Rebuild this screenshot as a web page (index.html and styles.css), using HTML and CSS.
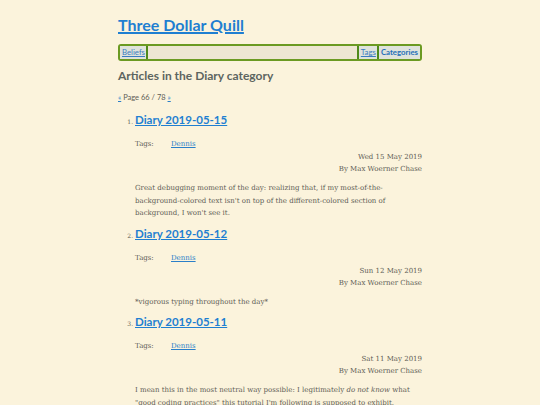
FILE: index.html
```html
<!DOCTYPE html>
<html>
<head>
<meta charset="utf-8">
<link rel="stylesheet" href="styles.css">
</head>
<body>
<div class="page">
  <h1 class="site-title"><a href="#">Three Dollar Quill</a></h1>
  <nav class="nav">
    <a class="nav-link" href="#">Beliefs</a>
    <span class="nav-fill"></span>
    <a class="nav-link nav-link-left" href="#">Tags</a>
    <a class="nav-link nav-current" href="#">Categories</a>
  </nav>
  <h2 class="page-heading">Articles in the Diary category</h2>
  <p class="pager"><a href="#">«</a> Page 66 / 78 <a href="#">»</a></p>
  <ol class="articles" start="1">
    <li class="article">
      <h3 class="article-title"><a href="#">Diary 2019-05-15</a></h3>
      <div class="tags"><span class="tags-label">Tags:</span><a href="#">Dennis</a></div>
      <div class="meta meta-date">Wed 15 May 2019</div>
      <div class="meta">By Max Woerner Chase</div>
      <p class="summary">Great debugging moment of the day: realizing that, if my most-of-the-background-colored text isn't on top of the different-colored section of background, I won't see it.</p>
    </li>
    <li class="article">
      <h3 class="article-title"><a href="#">Diary 2019-05-12</a></h3>
      <div class="tags"><span class="tags-label">Tags:</span><a href="#">Dennis</a></div>
      <div class="meta meta-date">Sun 12 May 2019</div>
      <div class="meta">By Max Woerner Chase</div>
      <p class="summary">*vigorous typing throughout the day*</p>
    </li>
    <li class="article">
      <h3 class="article-title"><a href="#">Diary 2019-05-11</a></h3>
      <div class="tags"><span class="tags-label">Tags:</span><a href="#">Dennis</a></div>
      <div class="meta meta-date">Sat 11 May 2019</div>
      <div class="meta">By Max Woerner Chase</div>
      <p class="summary">I mean this in the most neutral way possible: I legitimately <em>do not know</em> what "good coding practices" this tutorial I'm following is supposed to exhibit.</p>
    </li>
  </ol>
</div>
</body>
</html>
```
FILE: styles.css
```css
html, body {
  margin: 0;
  padding: 0;
  background: #fbf3dc;
}
body {
  font-family: "DejaVu Serif", serif;
  color: #5e5d56;
  font-size: 7px;
}
a {
  color: #2a7fc9;
}
.page {
  width: 304px;
  margin: 0 auto;
  padding-top: 15px;
}
.site-title {
  margin: 0 0 9px 0;
  font-family: Lato, sans-serif;
  font-weight: 700;
  font-size: 16px;
  line-height: 20px;
}
.site-title a {
  color: #1f7fd1;
  text-decoration-thickness: 1.5px;
}
.nav {
  display: flex;
  align-items: stretch;
  height: 13px;
  border: 2px solid #6b9a22;
  border-radius: 3px;
  background: #ede6d2;
  font-family: Lato, sans-serif;
  font-size: 7.8px;
  line-height: 13px;
}
.nav-link {
  padding: 0 1px 0 2px;
  color: #3b7cc0;
  background: #dfe3dc;
  border-right: 2px solid #4f8a1a;
}
.nav-fill {
  flex: 1;
}
.nav-link-left {
  border-left: 2px solid #4f8a1a;
}
.nav-current {
  border-right: none;
  font-weight: 700;
  text-decoration: none;
  color: #1f6fb8;
  padding-right: 2px;
}
.page-heading {
  margin: 7px 0 0 0;
  font-family: Lato, sans-serif;
  font-weight: 700;
  font-size: 12px;
  line-height: 15px;
  color: #5d6560;
}
.pager {
  margin: 10px 0 0 0;
  font-family: Lato, sans-serif;
  font-size: 7.5px;
  line-height: 10px;
}
.articles {
  margin: 9px 0 0 0;
  padding-left: 17px;
  font-size: 6px;
}
.article {
  margin-bottom: 6px;
}
.article-title {
  margin: 0;
  font-family: Lato, sans-serif;
  font-weight: 700;
  font-size: 11.5px;
  line-height: 15px;
}
.article-title a {
  color: #1f7fd1;
  text-decoration-thickness: 1.2px;
}
.tags {
  display: flex;
  margin-top: 11px;
  font-size: 7px;
  line-height: 12px;
}
.tags-label {
  width: 36px;
}
.meta {
  text-align: right;
  font-size: 7px;
  line-height: 12px;
}
.meta-date {
  margin-top: 1px;
}
.summary {
  margin: 7px 0 0 0;
  font-size: 7px;
  line-height: 12.5px;
}
```
